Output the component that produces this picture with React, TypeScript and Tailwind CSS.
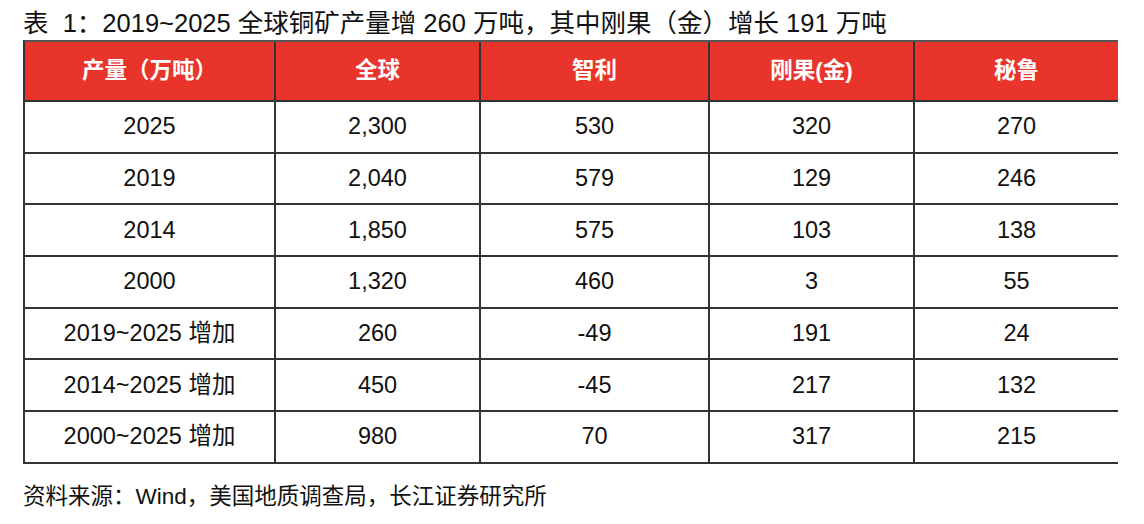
import React from "react";

const header = ["产量（万吨）", "全球", "智利", "刚果(金)", "秘鲁"];
const rows: string[][] = [
  ["2025", "2,300", "530", "320", "270"],
  ["2019", "2,040", "579", "129", "246"],
  ["2014", "1,850", "575", "103", "138"],
  ["2000", "1,320", "460", "3", "55"],
  ["2019~2025 增加", "260", "-49", "191", "24"],
  ["2014~2025 增加", "450", "-45", "217", "132"],
  ["2000~2025 增加", "980", "70", "317", "215"],
];

export default function App() {
  return (
    <div className="w-[1144px] h-[524px] bg-white text-[#111] font-['Liberation_Sans','Noto_Sans_CJK_SC',sans-serif] pl-[23px] pt-[7px]">
      <div className="h-[33px] text-[25.5px] leading-[33px] whitespace-nowrap">
        表&nbsp;&nbsp;1：2019~2025 全球铜矿产量增 260 万吨，其中刚果（金）增长 191 万吨
      </div>
      <div className="w-[1095px] border-t-2 border-l-2 border-t-[#555] border-l-[#333] grid grid-cols-[251px_205px_229px_205px_203px]">
        {header.map((h, i) => (
          <div
            key={h}
            className={`h-[60px] bg-[#e8342a] text-white font-bold text-[22.5px] flex items-center justify-center border-b-2 border-[#333] ${
              i < 4 ? "border-r-2" : ""
            }`}
          >
            {h}
          </div>
        ))}
        {rows.map((r, ri) =>
          r.map((c, ci) => (
            <div
              key={`${ri}-${ci}`}
              className={`h-[51.7px] text-[23.5px] flex items-center justify-center border-b-2 border-[#333] ${
                ci < 4 ? "border-r-2" : ""
              }`}
            >
              {c}
            </div>
          ))
        )}
      </div>
      <div className="mt-[19px] text-[22.5px] leading-[28px] whitespace-nowrap">
        资料来源：Wind，美国地质调查局，长江证券研究所
      </div>
    </div>
  );
}
